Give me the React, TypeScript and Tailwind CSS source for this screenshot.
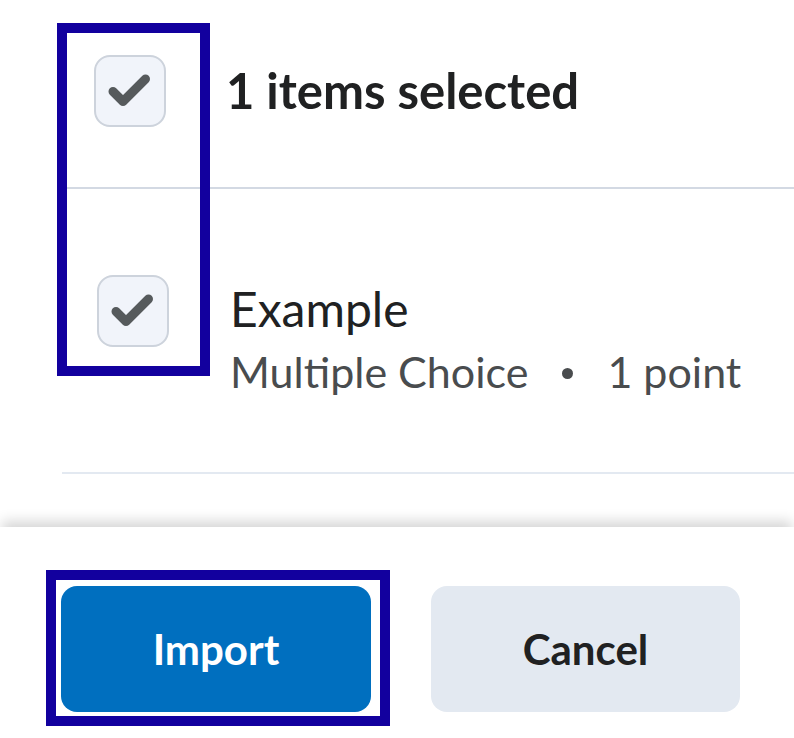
import React from "react";

function CheckBox() {
  return (
    <div className="flex h-[72px] w-[72px] shrink-0 items-center justify-center rounded-[16px] border-2 border-[#cdd3dc] bg-[#f1f4fa]">
      <svg width="68" height="68" viewBox="2 2 68 68" fill="none">
        <path
          d="M19 36.5 L29 46.5 L51.5 24"
          stroke="#565a5c"
          strokeWidth="9"
          strokeLinecap="round"
          strokeLinejoin="round"
        />
      </svg>
    </div>
  );
}

export default function App() {
  return (
    <div className="relative h-[738px] w-[794px] overflow-hidden bg-white font-['Lato','Liberation_Sans',sans-serif]">
      <div className="h-[527px]">
        <div className="flex h-[187px] items-center pb-[6px] pl-[94px]">
          <CheckBox />
          <h2 className="ml-[60px] text-[49px] leading-[1.2] font-bold text-[#202122]">1 items selected</h2>
        </div>
        <div className="ml-[60px] h-[2px] bg-[#d3d9e3]" />
        <div className="flex h-[283px] pl-[97px]">
          <div className="pt-[86px]">
            <CheckBox />
          </div>
          <div className="ml-[61px] pt-[91px]">
            <div className="text-[48px] leading-[1.2] text-[#202122]">Example</div>
            <div className="mt-[8px] flex items-center text-[43px] leading-[1.2] text-[#494c4e]">
              <span>Multiple Choice</span>
              <span className="mt-[4px] mr-[34px] ml-[34px] h-[11px] w-[11px] rounded-full bg-[#494c4e]" />
              <span>1 point</span>
            </div>
          </div>
        </div>
        <div className="ml-[62px] h-[2px] bg-[#e3e9f1]" />
      </div>

      <div className="relative h-[211px] bg-white shadow-[0_-8px_12px_-2px_rgba(0,0,0,0.16)]">
        <div className="flex gap-[60px] pt-[59px] pl-[61px]">
          <button className="flex h-[126px] w-[310px] items-center justify-center rounded-[16px] bg-[#006fbf] text-[42px] font-bold text-white">
            Import
          </button>
          <button className="flex h-[126px] w-[309px] items-center justify-center rounded-[16px] bg-[#e3e9f1] text-[42px] font-bold text-[#202122]">
            Cancel
          </button>
        </div>
      </div>

      <div className="pointer-events-none absolute top-[23px] left-[57px] h-[353px] w-[153px] border-[10px] border-[#12009e]" />
      <div className="pointer-events-none absolute top-[570px] left-[46px] h-[156px] w-[344px] border-[10px] border-[#12009e]" />
    </div>
  );
}
